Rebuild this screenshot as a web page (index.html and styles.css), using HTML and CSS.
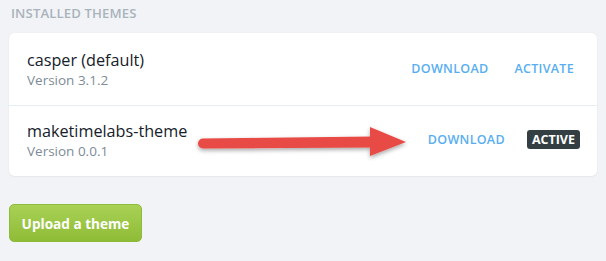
FILE: index.html
```html
<!DOCTYPE html>
<html>
<head>
<meta charset="utf-8">
<link rel="stylesheet" href="styles.css">
</head>
<body>
<div class="page">
  <h4 class="section-title">INSTALLED THEMES</h4>
  <div class="card">
    <div class="row">
      <div class="info">
        <div class="name">casper (default)</div>
        <div class="version">Version 3.1.2</div>
      </div>
      <div class="actions">
        <a class="link">DOWNLOAD</a>
        <a class="link">ACTIVATE</a>
      </div>
    </div>
    <div class="row">
      <div class="info">
        <div class="name">maketimelabs-theme</div>
        <div class="version">Version 0.0.1</div>
      </div>
      <div class="actions">
        <a class="link">DOWNLOAD</a>
        <span class="badge">ACTIVE</span>
      </div>
    </div>
  </div>
  <button class="upload">Upload a theme</button>
  <svg class="arrow" width="230" height="50" viewBox="0 0 230 50">
    <defs>
      <filter id="sh" x="-10%" y="-50%" width="120%" height="200%">
        <feDropShadow dx="0" dy="2" stdDeviation="2" flood-color="#000" flood-opacity="0.35"/>
      </filter>
    </defs>
    <g filter="url(#sh)">
      <path d="M8 17.5 L178 15.5 L178 26.5 L8 27.5 A5 5 0 0 1 8 17.5 Z" fill="#e84b45"/>
      <path d="M175 6 L211 21 L175 35 Z" fill="#e84b45"/>
    </g>
  </svg>
</div>
</body>
</html>
```
FILE: styles.css
```css
* { box-sizing: border-box; }
html, body { margin: 0; padding: 0; }
body {
  background: #f2f3f7;
  font-family: "Open Sans", "Noto Sans", sans-serif;
  width: 606px;
  height: 261px;
  overflow: hidden;
}
.page {
  position: relative;
  padding: 4px 9px 0 9px;
}
.section-title {
  margin: 0 0 11px 2px;
  font-size: 13.2px;
  font-weight: 600;
  color: #a9b3bb;
  letter-spacing: 0.1px;
  line-height: 18px;
}
.card {
  width: 588px;
  background: #fff;
  border-radius: 5px;
  box-shadow: 0 0 1px rgba(0,0,0,0.12), 0 1px 2px rgba(0,0,0,0.04);
}
.row {
  display: flex;
  align-items: center;
  justify-content: space-between;
  height: 72px;
  padding: 0 23px 0 18px;
}
.row + .row {
  border-top: 1px solid #e6edf4;
  height: 71px;
  padding-right: 17px;
}
.name {
  font-size: 16.2px;
  color: #15212a;
  line-height: 21px;
}
.version {
  font-size: 13.5px;
  color: #7d8b96;
  line-height: 18px;
  margin-top: 0px;
}
.row:first-child .info { margin-top: 1px; }
.row + .row .info { margin-top: -2px; }
.actions {
  display: flex;
  align-items: center;
  gap: 26px;
}
.row + .row .actions { gap: 22px; margin-top: -4px; }
.link {
  font-size: 12.5px;
  font-weight: 600;
  color: #58aef0;
  letter-spacing: 0.3px;
}
.row:first-child .link { margin-top: -2px; }
.badge {
  background: #343f44;
  color: #fff;
  font-size: 12.5px;
  font-weight: 700;
  padding: 1px 5px;
  border-radius: 3px;
  line-height: 17px;
}
.upload {
  display: block;
  margin-top: 28px;
  width: 133px;
  height: 38px;
  border: 1px solid #8dbb3a;
  border-radius: 5px;
  background: linear-gradient(#a8d155, #8fbc37);
  color: #fff;
  font-family: "Open Sans", "Noto Sans", sans-serif;
  font-size: 13.6px;
  font-weight: 700;
  padding: 0;
}
.arrow {
  position: absolute;
  left: 195px;
  top: 121px;
}
```
